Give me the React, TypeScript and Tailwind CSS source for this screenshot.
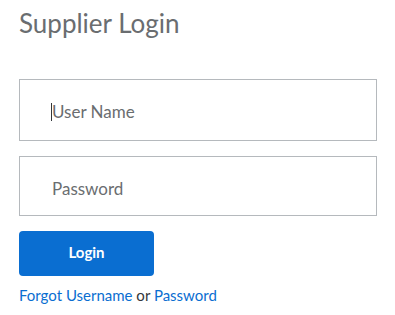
import React from 'react';

const font = { fontFamily: 'Lato, "Noto Sans", Arial, sans-serif' };

export default function App() {
  return (
    <div className="w-[395px] h-[315px] bg-white pl-[19px] pt-[6px]" style={font}>
      <h1 className="text-[26px] leading-[34px] text-[#6a6d70] font-normal">Supplier Login</h1>

      <div className="mt-[39px] flex flex-col gap-[15px] w-[358px]">
        <div className="h-[62px] border border-[#b5b9bd] flex items-center pl-[31px] pt-[4px]">
          <span className="w-px h-[18px] bg-[#32363a]" />
          <span className="text-[17px] text-[#6a6d70]">User Name</span>
        </div>
        <div className="h-[60px] border border-[#b5b9bd] flex items-center pl-[32px] pt-[5px]">
          <span className="text-[17px] text-[#6a6d70]">Password</span>
        </div>
      </div>

      <button className="mt-[15px] w-[135px] h-[45px] rounded-[4px] bg-[#0a6ed1] text-white text-[15px] font-bold pb-[2px]">
        Login
      </button>

      <div className="mt-[9px] text-[15px] leading-[20px]">
        <a className="text-[#0a6ed1]">Forgot Username</a>
        <span className="text-[#32363a]"> or </span>
        <a className="text-[#0a6ed1]">Password</a>
      </div>
    </div>
  );
}
